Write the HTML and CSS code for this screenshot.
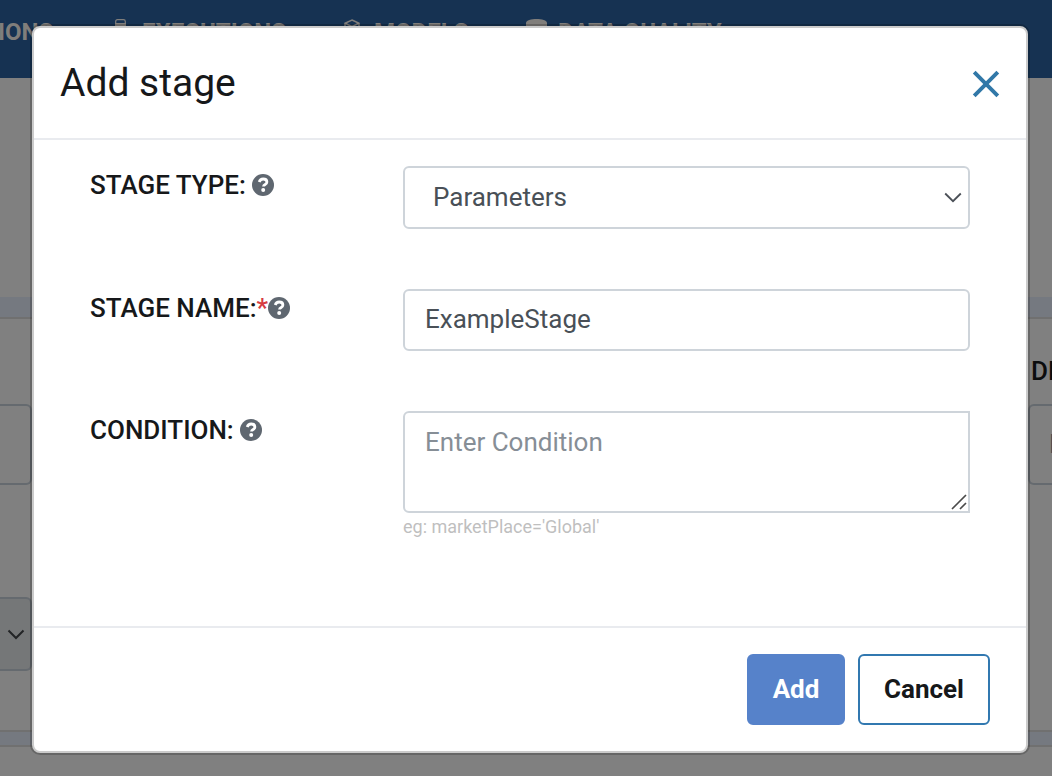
FILE: index.html
```
<!DOCTYPE html>
<html lang="en">
<head>
<meta charset="utf-8">
<title>Add stage</title>
<link rel="stylesheet" href="styles.css">
</head>
<body>
<div class="page">
  <nav class="navbar">
    <span class="nav-item nav-first">IONS</span>
    <span class="nav-item nav-exec"><svg class="nav-icon" width="12" height="22" viewBox="0 0 12 22"><path d="M.700 4V2.500Q.700.700 2.500.700h6q1.800 0 1.800 1.800V4" fill="none" stroke="currentColor" stroke-width="1.200"/><path d="M0 4h11v17H0z" fill="currentColor"/></svg><span>EXECUTIONS</span></span>
    <span class="nav-item nav-models"><svg class="nav-icon" width="16" height="20" viewBox="0 0 16 20"><path d="M8 1l7 3.200v10L8 18l-7-3.800v-10zM1 4.200l7 3.300 7-3.300M8 7.500V18" fill="none" stroke="currentColor" stroke-width="1.500"/></svg><span>MODELS</span></span>
    <span class="nav-item nav-quality"><svg class="nav-icon" width="21" height="24" viewBox="0 0 21 24"><path d="M0 4C0-1.300 21-1.300 21 4v15c0 5.300-21 5.300-21 0z" fill="currentColor"/></svg><span>DATA QUALITY</span></span>
  </nav>
  <main class="content">
    <div class="band band-top"></div>
    <div class="columns">
      <div class="col-left">
        <div class="box"></div>
        <div class="box box-select"><svg width="18" height="11" viewBox="0 0 18 11"><path d="M1.500 1.500L9 9l7.500-7.500" fill="none" stroke="#222426" stroke-width="2"/></svg></div>
      </div>
      <div class="col-right">
        <div class="col-label">DESCRIPTION</div>
        <div class="box box-right">Enter</div>
      </div>
    </div>
    <div class="band band-bottom"></div>
  </main>
</div>

<div class="modal" role="dialog" aria-labelledby="modal-title">
  <header class="modal-header">
    <h1 class="modal-title" id="modal-title">Add stage</h1>
    <button class="close" type="button" aria-label="Close"><svg width="28" height="28" viewBox="0 0 28 28"><path d="M2.200 2.200l23.600 23.600M25.800 2.200L2.200 25.800" fill="none" stroke="#3178a8" stroke-width="3.900"/></svg></button>
  </header>
  <form class="modal-body">
    <div class="row row-type">
      <label class="label">STAGE TYPE:<svg class="help spaced" viewBox="0 0 22 22"><circle cx="11" cy="11" r="11" fill="#5f6770"/><path d="M7.200 8q1-3 4-3 3.700 0 3.700 2.900 0 1.500-1.800 2.600-1.600.9-1.600 2" fill="none" stroke="#fff" stroke-width="2.800"/><circle cx="11.200" cy="16" r="2" fill="#fff"/></svg></label>
      <div class="control select"><span>Parameters</span><svg width="18" height="11" viewBox="0 0 18 11"><path d="M1.200 1.500L9 9.200l7.800-7.700" fill="none" stroke="#4b5057" stroke-width="1.800"/></svg></div>
    </div>
    <div class="row row-name">
      <label class="label">STAGE NAME:<span class="required">*</span><svg class="help" viewBox="0 0 22 22"><circle cx="11" cy="11" r="11" fill="#5f6770"/><path d="M7.200 8q1-3 4-3 3.700 0 3.700 2.900 0 1.500-1.800 2.600-1.600.9-1.600 2" fill="none" stroke="#fff" stroke-width="2.800"/><circle cx="11.200" cy="16" r="2" fill="#fff"/></svg></label>
      <input class="control input" type="text" value="ExampleStage">
    </div>
    <div class="row row-condition">
      <label class="label">CONDITION:<svg class="help spaced" viewBox="0 0 22 22"><circle cx="11" cy="11" r="11" fill="#5f6770"/><path d="M7.200 8q1-3 4-3 3.700 0 3.700 2.900 0 1.500-1.800 2.600-1.600.9-1.600 2" fill="none" stroke="#fff" stroke-width="2.800"/><circle cx="11.200" cy="16" r="2" fill="#fff"/></svg></label>
      <div class="field">
        <textarea class="control textarea" placeholder="Enter Condition"></textarea>
        <svg class="grip" width="16" height="16" viewBox="0 0 16 16"><path d="M1 15L15 1M9 15l6-6" fill="none" stroke="#4a4a4a" stroke-width="1.700"/></svg>
        <div class="hint">eg: marketPlace='Global'</div>
      </div>
    </div>
  </form>
  <footer class="modal-footer">
    <button class="btn btn-primary" type="button">Add</button>
    <button class="btn btn-outline" type="button">Cancel</button>
  </footer>
</div>
</body>
</html>
```
FILE: styles.css
```
* { box-sizing: border-box; }
body {
  margin: 0;
  width: 1052px;
  height: 776px;
  overflow: hidden;
  background: #808080;
  font-family: Roboto, "Liberation Sans", sans-serif;
  font-size: 26px;
  color: #16181a;
}
svg { display: block; flex: none; }

.navbar {
  display: flex;
  height: 78px;
  background: #163252;
  color: #807e7b;
  font-size: 24px;
  font-weight: 700;
  line-height: 30px;
  white-space: nowrap;
}
.nav-item { display: flex; flex: none; padding-top: 17px; }
.nav-first { width: 115px; text-indent: -2px; }
.nav-exec { width: 229px; gap: 15px; }
.nav-models { width: 182px; gap: 14px; }
.nav-quality { gap: 11px; }
.nav-icon { margin-top: 2px; }

.content { padding-top: 219px; }
.band { background: #757980; }
.band-top { height: 22px; border-bottom: 2px solid #707070; }
.band-bottom { height: 17px; border-top: 2px solid #707070; border-bottom: 2px solid #707070; }
.columns { display: flex; justify-content: space-between; height: 411px; overflow: hidden; }
.col-left { width: 32px; padding-top: 85px; }
.col-right { width: 24px; padding-top: 37px; }
.box {
  height: 81px;
  border: 2px solid #656a6f;
  border-left: 0;
  border-radius: 0 6px 6px 0;
}
.box-select {
  display: flex;
  align-items: center;
  height: 74px;
  margin-top: 112px;
  padding-left: 7px;
  background: #757778;
}
.col-label { height: 48px; padding-left: 3px; font-weight: 500; line-height: 30px; color: #0c0d0e; }
.box-right {
  padding-left: 19px;
  overflow: hidden;
  border: 2px solid #656a6f;
  border-right: 0;
  border-radius: 6px 0 0 6px;
  line-height: 77px;
  color: #43484e;
}

.modal {
  position: absolute;
  left: 32px;
  top: 26px;
  display: flex;
  flex-direction: column;
  width: 996px;
  height: 727px;
  border: 2px solid #cbcbcb;
  border-radius: 8px;
  background: #fff;
  box-shadow: 0 0 0 2px rgba(0, 0, 0, .2);
}
.modal-header {
  display: flex;
  justify-content: space-between;
  height: 112px;
  padding: 28px 26px 0;
  border-bottom: 2px solid #e9ebef;
}
.modal-title { margin: 0; font-size: 39px; font-weight: 400; line-height: 55px; }
.close { height: 28px; margin: 14px 0 0; padding: 0; border: 0; background: none; }
.modal-body { flex: 1; padding: 26px 56px 0; }
.row { display: grid; grid-template-columns: 313px 567px; align-items: start; }
.row-type { height: 123px; }
.row-name { height: 122px; }
.label { display: flex; padding-top: 4px; font-weight: 500; line-height: 30px; white-space: nowrap; }
.help { width: 22px; height: 22px; margin-top: 4px; }
.spaced { margin-left: 6px; }
.required { color: #d63b42; font-weight: 500; }
.control {
  display: block;
  width: 100%;
  margin: 0;
  border: 2px solid #ced4da;
  border-radius: 6px;
  outline: 0;
  background: #fff;
  font: inherit;
  color: #495057;
}
.select { display: flex; align-items: center; justify-content: space-between; height: 63px; padding: 0 6px 0 28px; }
.select span { padding-bottom: 2px; }
.input { height: 62px; padding: 0 20px 2px; }
.field { position: relative; }
.textarea { height: 102px; padding: 14px 20px; border-radius: 6px 0 0 6px; line-height: 30px; resize: none; }
.textarea::placeholder { color: #868e96; opacity: 1; }
.grip { position: absolute; right: 3px; top: 83px; }
.hint { font-size: 18px; line-height: 28px; color: #bfbfbf; }

.modal-footer {
  display: flex;
  justify-content: flex-end;
  gap: 13px;
  height: 125px;
  padding: 26px 36px;
  border-top: 2px solid #e9ebef;
}
.btn { height: 71px; padding: 0 0 2px; border: 2px solid; border-radius: 6px; font: 700 26px Roboto, "Liberation Sans", sans-serif; }
.btn-primary { width: 98px; border-color: #5682ca; background: #5682ca; color: #fff; }
.btn-outline { width: 132px; border-color: #3178b0; background: #fff; color: #16181a; }
```
